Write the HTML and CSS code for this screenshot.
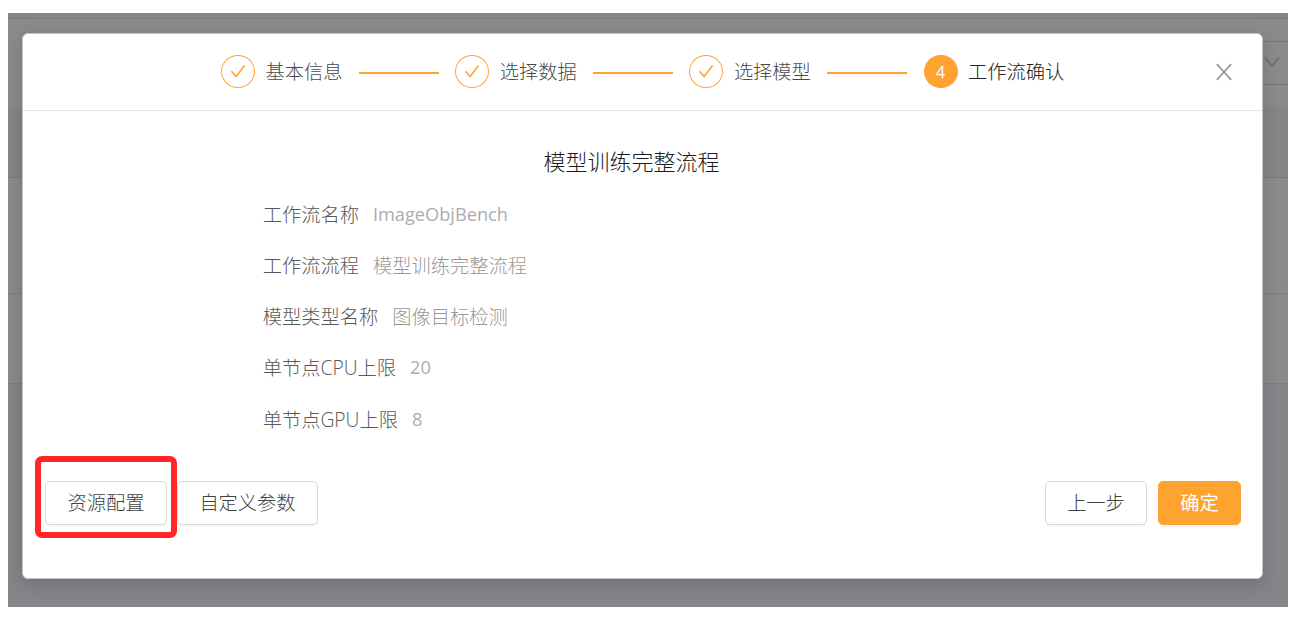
FILE: index.html
```html
<!DOCTYPE html>
<html lang="zh-CN">
<head>
<meta charset="utf-8">
<title>工作流确认</title>
<link rel="stylesheet" href="styles.css">
</head>
<body>
<div class="screen">
  <div class="backdrop">
    <div class="topbar"></div>
    <div class="filters">
      <div class="select">
        <svg width="16" height="12" viewBox="0 0 16 12"><path d="M1 1l7 9 7-9" fill="none" stroke="#6b6b6b" stroke-width="1.6"/></svg>
      </div>
    </div>
    <div class="table-head"></div>
    <div class="table-row tall"></div>
    <div class="table-row"></div>
  </div>
  <div class="modal">
    <div class="modal-header">
      <div class="steps">
        <div class="step">
          <span class="dot"><svg width="18" height="16" viewBox="0 0 18 16"><path d="M2.5 7.3l4.6 5.2L15.6 1.6" fill="none" stroke="#ffa330" stroke-width="1.6"/></svg></span>
          <span class="label">基本信息</span><span class="line"></span>
        </div>
        <div class="step">
          <span class="dot"><svg width="18" height="16" viewBox="0 0 18 16"><path d="M2.5 7.3l4.6 5.2L15.6 1.6" fill="none" stroke="#ffa330" stroke-width="1.6"/></svg></span>
          <span class="label">选择数据</span><span class="line"></span>
        </div>
        <div class="step">
          <span class="dot"><svg width="18" height="16" viewBox="0 0 18 16"><path d="M2.5 7.3l4.6 5.2L15.6 1.6" fill="none" stroke="#ffa330" stroke-width="1.6"/></svg></span>
          <span class="label">选择模型</span><span class="line"></span>
        </div>
        <div class="step">
          <span class="dot active">4</span>
          <span class="label current">工作流确认</span>
        </div>
      </div>
      <svg class="close" width="18" height="18" viewBox="0 0 18 18"><path d="M1.8 1l14.4 16M16.2 1L1.8 17" fill="none" stroke="#8c8c8c" stroke-width="1.6"/></svg>
    </div>
    <div class="modal-body">
      <div class="title">模型训练完整流程</div>
      <div class="rows">
        <div class="row"><span>工作流名称</span><span class="value latin">ImageObjBench</span></div>
        <div class="row"><span>工作流流程</span><span class="value">模型训练完整流程</span></div>
        <div class="row"><span>模型类型名称</span><span class="value">图像目标检测</span></div>
        <div class="row"><span>单节点CPU上限</span><span class="value latin">20</span></div>
        <div class="row"><span>单节点GPU上限</span><span class="value latin">8</span></div>
      </div>
    </div>
    <div class="modal-footer">
      <div class="marked"><div class="btn config">资源配置</div><div class="mark"></div></div>
      <div class="btn params">自定义参数</div>
      <div class="btn prev">上一步</div>
      <div class="btn primary">确定</div>
    </div>
  </div>
</div>
</body>
</html>
```
FILE: styles.css
```css
* { box-sizing: border-box; }
body {
  margin: 0;
  padding: 13px 8px;
  background: #fff;
  font-family: "Open Sans", "Noto Sans CJK SC", sans-serif;
  font-size: 19.25px;
  font-weight: 300;
}
svg { display: block; }
.screen {
  display: grid;
  grid-template: 594px / 1280px;
  overflow: hidden;
}
.backdrop, .modal { grid-area: 1 / 1; }
.backdrop { background: #858489; }
.topbar { height: 6px; border-bottom: 1px solid #7d7c80; }
.filters {
  height: 88px;
  padding-top: 22px;
  background: #8a8a8a;
}
.select {
  display: flex;
  justify-content: flex-end;
  width: 200px;
  height: 44px;
  margin-left: auto;
  padding: 14px 8px 0 0;
  border: solid #757575;
  border-width: 1px 0;
}
.table-head { height: 71px; background: #838684; border-bottom: 1px solid #797a79; }
.table-row { height: 90px; background: #8a8a8a; border-bottom: 1px solid #7d7d7d; }
.table-row.tall { height: 116px; }
.modal {
  display: flex;
  flex-direction: column;
  width: 1241px;
  height: 546px;
  margin: 20px 0 0 14px;
  border: 1px solid #c4c4c4;
  border-radius: 6px;
  background: #fff;
  box-shadow: 0 5px 16px rgba(0, 0, 0, .16);
}
.modal-header {
  display: flex;
  align-items: center;
  justify-content: space-between;
  height: 77px;
  padding: 0 29px 0 198px;
  border-bottom: 1px solid #e5e5e5;
}
.steps, .step { display: flex; align-items: center; }
.dot {
  display: flex;
  flex-shrink: 0;
  align-items: center;
  justify-content: center;
  width: 34px;
  height: 33px;
  margin-bottom: 1px;
  border: 1.5px solid #ffa330;
  border-radius: 50%;
}
.dot.active { background: #ffa330; color: #fff; font-size: 16px; font-weight: 400; }
.label { margin-left: 10.5px; line-height: 28px; color: #484848; white-space: nowrap; }
.label.current { color: #222; }
.line {
  flex-shrink: 0;
  width: 80px;
  height: 2px;
  margin: 1px 0 0 16.5px;
  background: #ffa330;
}
.step:not(:last-child) { width: 234.2px; }
.modal-body { padding-top: 33px; }
.title {
  font-size: 22px;
  line-height: 34px;
  padding-right: 22px;
  text-align: center;
  color: #1c1c1c;
}
.rows { padding: 10.5px 0 0 239.7px; }
.row { display: flex; gap: 14px; height: 51.3px; line-height: 51.3px; color: #585858; }
.value { color: #989898; }
.value.latin { color: #adadad; font-size: 18.2px; font-weight: 400; }
.modal-footer {
  display: flex;
  padding: 0 21px 0 22px;
  margin-top: 36.5px;
}
.btn {
  height: 44px;
  line-height: 41px;
  border: 1.5px solid #d9d9d9;
  border-radius: 5px;
  background: #fff;
  box-shadow: 0 2px 1px rgba(0, 0, 0, .03);
  color: #404040;
  text-align: center;
  white-space: nowrap;
}
.marked { position: relative; }
.mark {
  position: absolute;
  inset: -25px -10px -13px -10px;
  border: 6px solid #ff2626;
  border-radius: 7px;
}
.config { width: 122px; }
.params { width: 141px; margin-left: 10px; }
.prev { width: 102px; margin-left: auto; }
.primary { width: 83px; margin-left: 11px; background: #ffa330; border-color: #ffa330; color: #fff; font-weight: 400; }
```
